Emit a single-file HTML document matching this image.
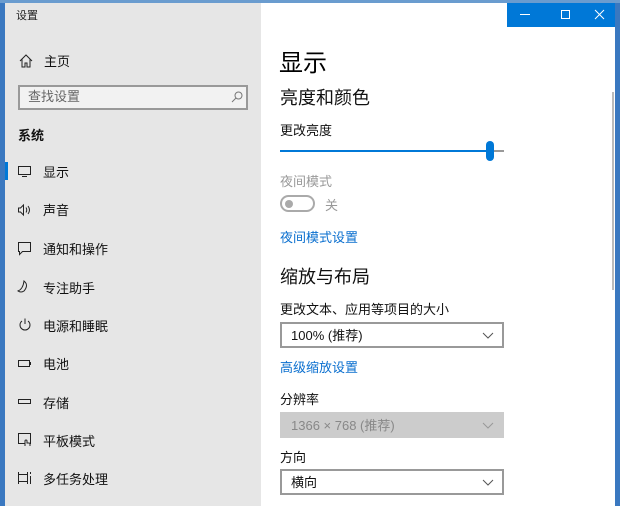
<!DOCTYPE html><html><head><meta charset="utf-8"><style>
*{margin:0;padding:0;box-sizing:border-box}
body{width:620px;height:506px;overflow:hidden;background:#3a78c0;font-family:"Liberation Sans","Noto Sans CJK SC",sans-serif;position:relative}
.a{position:absolute;white-space:nowrap}
#left{position:absolute;left:5px;top:3px;width:256px;height:503px;background:#e6e6e6}
#right{position:absolute;left:261px;top:3px;width:354px;height:503px;background:#fff}
.it{font-size:13px;color:#111;left:43px}
.dd{position:absolute;left:280px;width:224px;height:26px;border:2px solid #999;background:#fff;font-size:13px;padding:1px 0 0 9px;color:#111}
.dd svg{position:absolute;right:8px;top:8px}
.blue{color:#0a6fcf;font-size:13px}
</style></head><body>
<div id="left"></div><div id="right"></div>
<div class="a" style="left:0;top:0;width:620px;height:3px;background:#6a9ccf"></div>
<div class="a" style="left:507px;top:3px;width:108px;height:24px;background:#0078d7"></div>
<svg class="a" style="left:507px;top:3px" width="108" height="24"><line x1="13" y1="11.5" x2="23" y2="11.5" stroke="#fff"/><rect x="54.5" y="7.5" width="8" height="8" fill="none" stroke="#fff"/><path d="M88 7l9 9M97 7l-9 9" stroke="#fff"/></svg>
<div class="a" style="left:612px;top:92px;width:2px;height:198px;background:#bbb"></div>
<div class="a" style="left:16px;top:7px;font-size:11px;color:#222">设置</div>
<svg class="a" style="left:18px;top:53px" width="16" height="16"><path d="M2 8L8 2l6 6M4 6v8h3v-4h2v4h3V6" fill="none" stroke="#222"/></svg>
<div class="a it" style="top:51px;left:44px">主页</div>
<div class="a" style="left:18px;top:85px;width:230px;height:25px;border:2px solid #999;background:#f2f2f2;font-size:13px;color:#666;padding:0 0 0 8px;line-height:20px">查找设置</div>
<svg class="a" style="left:230px;top:90px" width="14" height="14"><circle cx="8.5" cy="5.5" r="3.5" fill="none" stroke="#777"/><line x1="6" y1="8" x2="2" y2="12" stroke="#777"/></svg>
<div class="a" style="left:18px;top:125px;font-size:13px;font-weight:bold;color:#111">系统</div>
<div class="a" style="left:5px;top:162px;width:3px;height:18px;background:#0078d7"></div>
<svg class="a" style="left:17px;top:164px" width="16" height="16"><rect x="1.5" y="2.5" width="12" height="8" fill="none" stroke="#222"/><line x1="5" y1="12.5" x2="10" y2="12.5" stroke="#222"/></svg>
<div class="a it" style="top:162px">显示</div>
<svg class="a" style="left:17px;top:202px" width="16" height="16"><path d="M1.5 6h2l3-3v10l-3-3h-2z" fill="none" stroke="#222"/><path d="M9 5.5q1.5 2.5 0 5M11 4q3 4 0 8" fill="none" stroke="#222"/></svg>
<div class="a it" style="top:200px">声音</div>
<svg class="a" style="left:17px;top:240px" width="16" height="16"><path d="M1.5 2.5h12v9h-8l-3 3v-3h-1z" fill="none" stroke="#222"/></svg>
<div class="a it" style="top:239px">通知和操作</div>
<svg class="a" style="left:17px;top:279px" width="16" height="16"><path d="M7 2q5 4 0 10q-3 2-6 0q5-2 6-10z" fill="none" stroke="#222"/></svg>
<div class="a it" style="top:278px">专注助手</div>
<svg class="a" style="left:17px;top:317px" width="16" height="16"><path d="M5 4a5 5 0 1 0 6 0" fill="none" stroke="#222"/><line x1="8" y1="1.5" x2="8" y2="7" stroke="#222"/></svg>
<div class="a it" style="top:316px">电源和睡眠</div>
<svg class="a" style="left:17px;top:356px" width="16" height="16"><rect x="1.5" y="4.5" width="11" height="6" fill="none" stroke="#222"/><line x1="13.5" y1="6" x2="13.5" y2="9" stroke="#222"/></svg>
<div class="a it" style="top:354px">电池</div>
<svg class="a" style="left:17px;top:394px" width="16" height="16"><rect x="1.5" y="5.5" width="12" height="4" fill="none" stroke="#222"/></svg>
<div class="a it" style="top:393px">存储</div>
<svg class="a" style="left:17px;top:432px" width="16" height="16"><rect x="1.5" y="1.5" width="12" height="10" fill="none" stroke="#222"/><path d="M8 14v-5a1 1 0 0 1 2 0v2h2a1 1 0 0 1 1 1v2" fill="#e6e6e6" stroke="#222"/></svg>
<div class="a it" style="top:431px">平板模式</div>
<svg class="a" style="left:17px;top:470px" width="16" height="16"><path d="M1.5 2v12M10.5 2v12M1.5 4.5h9M1.5 11.5h9M13.5 2v2M13.5 6v8" fill="none" stroke="#222"/></svg>
<div class="a it" style="top:469px">多任务处理</div>

<div class="a" style="left:279px;top:43px;font-size:24px;color:#000">显示</div>
<div class="a" style="left:280px;top:84px;font-size:18px;color:#111">亮度和颜色</div>
<div class="a" style="left:280px;top:120px;font-size:13px;color:#111">更改亮度</div>
<div class="a" style="left:280px;top:150px;width:209px;height:2px;background:#0078d7"></div>
<div class="a" style="left:489px;top:150px;width:15px;height:2px;background:#999"></div>
<div class="a" style="left:486px;top:141px;width:8px;height:20px;border-radius:4px;background:#0078d7"></div>
<div class="a" style="left:280px;top:171px;font-size:13px;color:#999">夜间模式</div>
<div class="a" style="left:280px;top:195px;width:35px;height:17px;border:2px solid #aaa;border-radius:9px"></div>
<div class="a" style="left:285px;top:200px;width:8px;height:8px;border-radius:4px;background:#aaa"></div>
<div class="a" style="left:325px;top:195px;font-size:13px;color:#999">关</div>
<div class="a blue" style="left:280px;top:227px">夜间模式设置</div>
<div class="a" style="left:280px;top:263px;font-size:18px;color:#111">缩放与布局</div>
<div class="a" style="left:280px;top:299px;font-size:13px;color:#111">更改文本、应用等项目的大小</div>
<div class="dd" style="top:322px">100% (推荐)<svg width="12" height="8"><path d="M1 1l5 5 5-5" fill="none" stroke="#555"/></svg></div>
<div class="a blue" style="left:280px;top:357px">高级缩放设置</div>
<div class="a" style="left:280px;top:389px;font-size:13px;color:#111">分辨率</div>
<div class="dd" style="top:412px;background:#ccc;border-color:#ccc;color:#888">1366 × 768 (推荐)<svg width="12" height="8"><path d="M1 1l5 5 5-5" fill="none" stroke="#999"/></svg></div>
<div class="a" style="left:280px;top:447px;font-size:13px;color:#111">方向</div>
<div class="dd" style="top:469px">横向<svg width="12" height="8"><path d="M1 1l5 5 5-5" fill="none" stroke="#555"/></svg></div>
</body></html>
